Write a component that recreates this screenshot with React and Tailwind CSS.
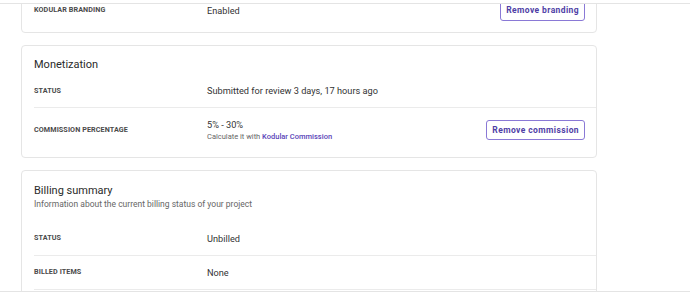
const Label = ({ children }) => (
  <div className="w-[173px] shrink-0 text-[7.2px] font-bold uppercase tracking-[0.1px] text-[#4a4a4a]">
    {children}
  </div>
);

const OutlineButton = ({ children }) => (
  <button className="ml-auto h-[20px] px-[5px] border border-[#8a79d6] rounded-[3px] bg-white text-[8.5px] font-bold tracking-[0.4px] text-[#4f3fa6] leading-none">
    {children}
  </button>
);

const Row = ({ label, children, action, className = "" }) => (
  <div className={`flex items-center pr-[11px] ${className}`}>
    <Label>{label}</Label>
    <div className="text-[9.2px] text-[#333]">{children}</div>
    {action}
  </div>
);

export default function App() {
  return (
    <div className="w-[690px] h-[307px] bg-white overflow-hidden font-['Roboto',sans-serif]">
      <div className="h-[3px]" />
      <div className="h-[289px] border-y border-[#e4e4e4] overflow-hidden">
        <div className="-mt-[24px] ml-[21px] w-[576px] flex flex-col gap-3">
          {/* branding card, cut off at the top */}
          <div className="h-[53px] flex flex-col justify-end pb-[3px] pl-3 border border-[#e5e5e5] rounded-[4px]">
            <Row
              label="Kodular Branding"
              className="h-[37px]"
              action={<OutlineButton>Remove branding</OutlineButton>}
            >
              Enabled
            </Row>
          </div>

          {/* monetization */}
          <div className="pt-[9px] pb-[5px] pl-3 border border-[#e5e5e5] rounded-[4px]">
            <h2 className="h-[20px] leading-[20px] text-[11px] text-[#2a2a2a]">Monetization</h2>
            <Row label="Status" className="h-[33px] border-b border-[#ebebeb]">
              Submitted for review 3 days, 17 hours ago
            </Row>
            <Row
              label="Commission percentage"
              className="h-[44px]"
              action={<OutlineButton>Remove commission</OutlineButton>}
            >
              <div className="leading-[13px]">5% - 30%</div>
              <div className="text-[7.5px] leading-[11px] text-[#666]">
                Calculate it with{" "}
                <span className="text-[#5a45b8] font-medium">Kodular Commission</span>
              </div>
            </Row>
          </div>

          {/* billing, runs past the bottom edge */}
          <div className="pt-3 pb-6 pl-3 border border-[#e5e5e5] rounded-[4px]">
            <h2 className="h-[16px] leading-[16px] text-[11px] text-[#2a2a2a]">Billing summary</h2>
            <p className="h-[11px] leading-[11px] text-[8.5px] text-[#666] mb-3">
              Information about the current billing status of your project
            </p>
            <Row label="Status" className="h-[34px] border-b border-[#ebebeb]">
              Unbilled
            </Row>
            <Row label="Billed items" className="h-[34px] border-b border-[#ebebeb]">
              None
            </Row>
          </div>
        </div>
      </div>
    </div>
  );
}
